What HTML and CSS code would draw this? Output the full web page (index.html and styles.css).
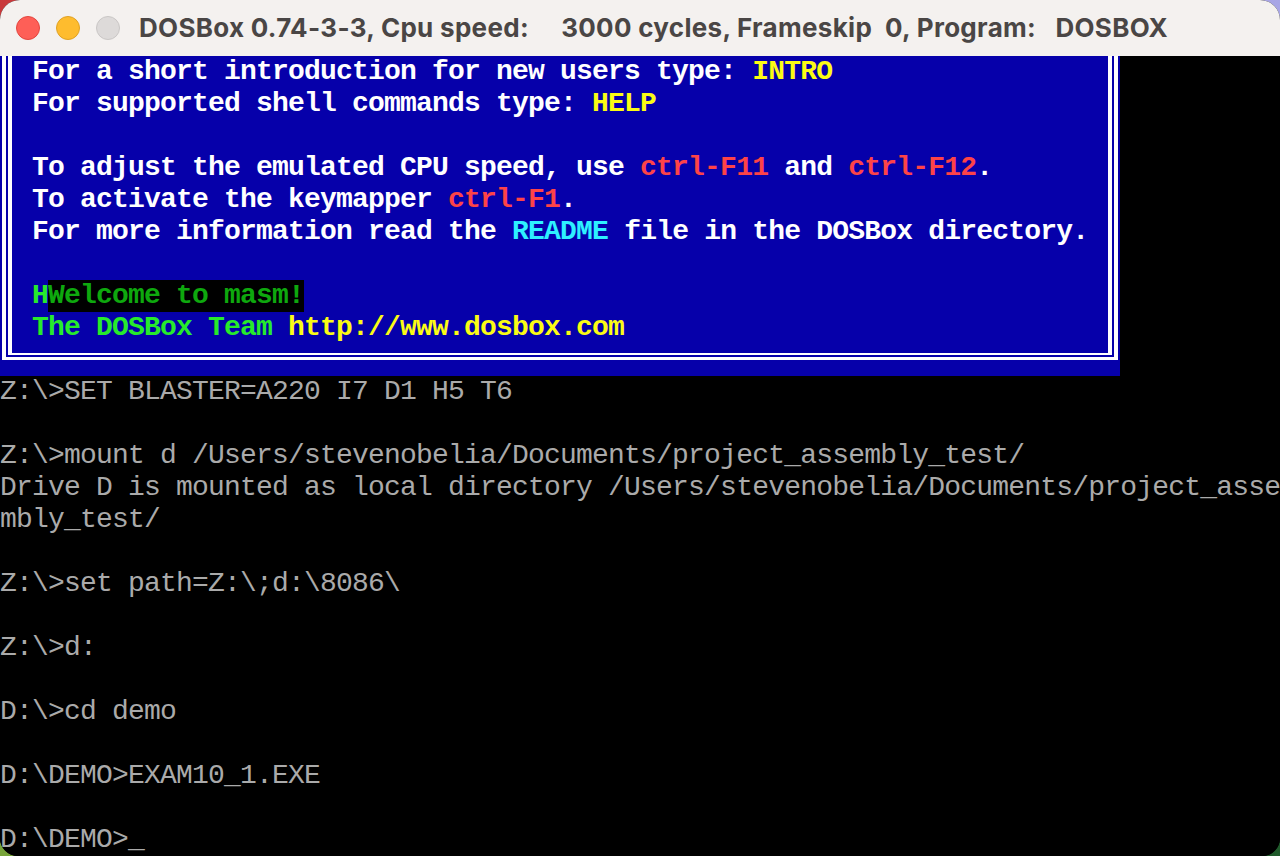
FILE: index.html
```html
<!DOCTYPE html>
<html lang="en">
<head>
    <meta charset="utf-8">
    <title>DOSBox</title>
    <link rel="stylesheet" href="styles.css">
</head>
<body>
<div class="window">
    <div class="titlebar">
        <div class="lights">
            <span class="light close"></span>
            <span class="light min"></span>
            <span class="light zoom"></span>
        </div>
        <div class="title">DOSBox 0.74-3-3, Cpu speed:     3000 cycles, Frameskip  0, Program:   DOSBOX</div>
    </div>
    <div class="screen">
        <div class="banner">
            <div class="frame">
                <div class="frame-inner">
                    <div class="row">For a short introduction for new users type: <span class="yellow">INTRO</span></div>
                    <div class="row">For supported shell commands type: <span class="yellow">HELP</span></div>
                    <div class="row"></div>
                    <div class="row">To adjust the emulated CPU speed, use <span class="red">ctrl-F11</span> and <span class="red">ctrl-F12</span>.</div>
                    <div class="row">To activate the keymapper <span class="red">ctrl-F1</span>.</div>
                    <div class="row">For more information read the <span class="cyan">README</span> file in the DOSBox directory.</div>
                    <div class="row"></div>
                    <div class="row"><span class="green">H</span><span class="masm">Welcome to masm!</span></div>
                    <div class="row"><span class="green">The DOSBox Team</span> <span class="yellow">http://www.dosbox.com</span></div>
                </div>
            </div>
        </div>
        <div class="row">Z:\>SET BLASTER=A220 I7 D1 H5 T6</div>
        <div class="row"></div>
        <div class="row">Z:\>mount d /Users/stevenobelia/Documents/project_assembly_test/</div>
        <div class="row">Drive D is mounted as local directory /Users/stevenobelia/Documents/project_asse</div>
        <div class="row">mbly_test/</div>
        <div class="row"></div>
        <div class="row">Z:\>set path=Z:\;d:\8086\</div>
        <div class="row"></div>
        <div class="row">Z:\>d:</div>
        <div class="row"></div>
        <div class="row">D:\>cd demo</div>
        <div class="row"></div>
        <div class="row">D:\DEMO>EXAM10_1.EXE</div>
        <div class="row"></div>
        <div class="row">D:\DEMO>_</div>
    </div>
</div>
</body>
</html>
```

FILE: styles.css
```css
*{
    margin:0;
    padding:0;
    box-sizing:border-box;
}
html,body{
    width:1280px;
    height:856px;
    overflow:hidden;
}
body{
    background:
        linear-gradient(to right, #c9393b, #a8a6e6) top / 100% 50% no-repeat,
        linear-gradient(to right, #78a43a, #1f5a2b) bottom / 100% 50% no-repeat;
}
.window{
    width:1280px;
    height:856px;
    border-radius:20px 20px 18px 18px;
    overflow:hidden;
    background:#000;
}
.titlebar{
    height:56px;
    display:flex;
    align-items:center;
    gap:19px;
    padding-left:16px;
    background:#f4f1ef;
}
.lights{
    display:flex;
    gap:16px;
}
.light{
    width:24px;
    height:24px;
    border-radius:50%;
}
.light.close{
    background:#fe5f57;
    border:1px solid #e2463f;
}
.light.min{
    background:#febc2e;
    border:1px solid #dfa124;
}
.light.zoom{
    background:#dddad9;
    border:1px solid #c9c6c5;
}
.title{
    font-family:Inter, "Noto Sans", sans-serif;
    font-weight:700;
    font-size:26px;
    letter-spacing:0.3px;
    color:#4a4645;
    white-space:pre;
    padding-bottom:2px;
}
.screen{
    height:800px;
    overflow:hidden;
    background:#000;
    color:#aaaaaa;
    font-family:"Liberation Mono", monospace;
    font-size:28px;
    letter-spacing:-0.8px;
}
.row{
    height:32px;
    line-height:32px;
    white-space:pre;
}
.banner{
    width:1120px;
    background:#0600aa;
    color:#ffffff;
    padding:0 2px 16px;
    font-weight:bold;
}
.frame{
    border:4px solid #fff;
    border-top:0;
    border-bottom-width:3px;
    padding:0 2px 2px;
}
.frame-inner{
    border:4px solid #fff;
    border-top:0;
    border-bottom-width:2px;
    padding:0 0 9px 20px;
}
.yellow{
    color:#fbfb14;
}
.red{
    color:#fd4348;
}
.cyan{
    color:#2ef0ff;
}
.green{
    color:#27ea2c;
}
.masm{
    background:#000;
    color:#0ea80e;
    display:inline-block;
    height:32px;
}
```
